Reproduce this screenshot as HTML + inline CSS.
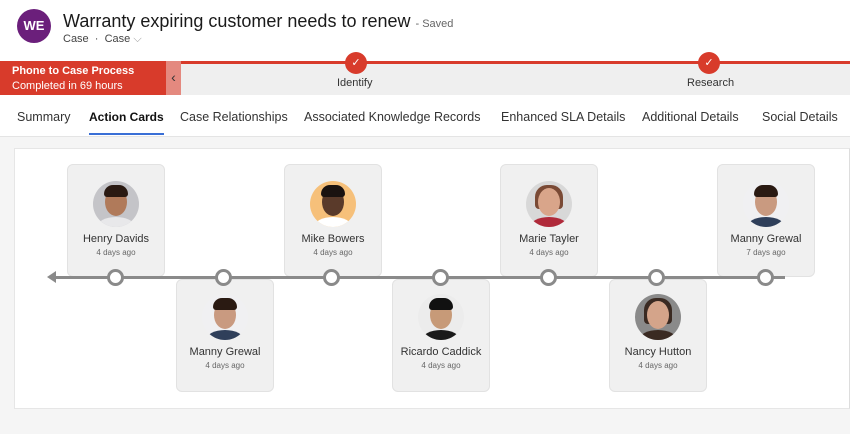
<!DOCTYPE html>
<html><head><meta charset="utf-8"><style>
*{margin:0;padding:0;box-sizing:border-box}
body{width:850px;height:434px;overflow:hidden;background:#f5f5f5;font-family:"Liberation Sans",sans-serif;position:relative;color:#242424}
.abs{position:absolute}
.hdr{left:0;top:0;width:850px;height:137px;background:#fff}
.card{position:absolute;width:98px;height:113px;background:#f0f0f0;border:1px solid #e2e2e2;border-radius:6px;text-align:center}
.av{position:absolute;left:25px;width:46px;height:46px;border-radius:50%;overflow:hidden}
.av .h{position:absolute;left:12px;top:7px;width:22px;height:28px;border-radius:50%}
.av .hr{position:absolute;left:11px;top:4px;width:24px;height:12px;border-radius:12px 12px 4px 4px}
.av .b{position:absolute;left:4px;top:36px;width:38px;height:20px;border-radius:50% 50% 0 0}
.nm{position:absolute;left:0;width:100%;font-size:11px;color:#333}
.dt{position:absolute;left:0;width:100%;font-size:8px;color:#666}
.node{position:absolute;width:17px;height:17px;border-radius:50%;background:#fff;border:3px solid #8a8a8a;top:269px}
.tab{position:absolute;top:110px;font-size:12.5px;color:#333}
</style></head><body>
<div class="abs hdr"></div>
<div class="abs" style="left:17px;top:9px;width:34px;height:34px;border-radius:50%;background:#6b1f7b;color:#fff;font-weight:bold;font-size:13px;line-height:34px;text-align:center">WE</div>
<div class="abs" style="left:63px;top:11px;font-size:18px;color:#1a1a1a">Warranty expiring customer needs to renew <span style="font-size:11px;color:#666">- Saved</span></div>
<div class="abs" style="left:63px;top:33px;font-size:11px;color:#444">Case &nbsp;·&nbsp; Case <span style="color:#999">⌵</span></div>
<div class="abs" style="left:0;top:61px;width:850px;height:34px;background:#efefef"></div>
<div class="abs" style="left:181px;top:61px;width:669px;height:3px;background:#d83b2b"></div>
<div class="abs" style="left:0;top:61px;width:166px;height:34px;background:#d83b2b;color:#fff;padding:3px 0 0 12px;font-size:11px;line-height:15px"><b>Phone to Case Process</b><br>Completed in 69 hours</div>
<div class="abs" style="left:166px;top:61px;width:15px;height:34px;background:#e4897f;color:#333;font-size:14px;text-align:center;line-height:32px">‹</div>
<div class="abs" style="left:345px;top:52px;width:22px;height:22px;border-radius:50%;background:#d83b2b;color:#fff;font-size:11px;text-align:center;line-height:22px">✓</div>
<div class="abs" style="left:698px;top:52px;width:22px;height:22px;border-radius:50%;background:#d83b2b;color:#fff;font-size:11px;text-align:center;line-height:22px">✓</div>
<div class="abs" style="left:337px;top:77px;font-size:11px;color:#333">Identify</div>
<div class="abs" style="left:687px;top:77px;font-size:11px;color:#333">Research</div>
<div class="tab" style="left:17px">Summary</div>
<div class="tab" style="left:89px;color:#111;font-weight:bold;font-size:12px">Action Cards</div>
<div class="abs" style="left:89px;top:133px;width:75px;height:2px;background:#3a6fd6"></div>
<div class="tab" style="left:180px">Case Relationships</div>
<div class="tab" style="left:304px">Associated Knowledge Records</div>
<div class="tab" style="left:501px">Enhanced SLA Details</div>
<div class="tab" style="left:642px">Additional Details</div>
<div class="tab" style="left:762px">Social Details</div>
<div class="abs" style="left:0;top:136px;width:850px;height:1px;background:#e4e4e4"></div>
<div class="abs" style="left:14px;top:148px;width:836px;height:261px;background:#fff;border:1px solid #e6e6e6;border-right:1px solid #ddd"></div>

<div class="card" style="left:67px;top:164px"><div class="av" style="top:16px;background:#c4c4c8"><div class="b" style="background:#e8e8ea"></div><div class="h" style="background:#b07a5a"></div><div class="hr" style="background:#2a1a12"></div></div><div class="nm" style="top:68px">Henry Davids</div><div class="dt" style="top:83px">4 days ago</div></div>
<div class="card" style="left:284px;top:164px"><div class="av" style="top:16px;background:#f6c07a"><div class="b" style="background:#fff"></div><div class="h" style="background:#5a3a2a"></div><div class="hr" style="background:#1a1210"></div></div><div class="nm" style="top:68px">Mike Bowers</div><div class="dt" style="top:83px">4 days ago</div></div>
<div class="card" style="left:500px;top:164px"><div class="av" style="top:16px;background:#d8d8d8"><div class="b" style="background:#b02a3a"></div><div class="hr" style="background:#7a4a35;height:24px;left:9px;width:28px"></div><div class="h" style="background:#d9a58a"></div></div><div class="nm" style="top:68px">Marie Tayler</div><div class="dt" style="top:83px">4 days ago</div></div>
<div class="card" style="left:717px;top:164px"><div class="av" style="top:16px;background:#f0f0f2"><div class="b" style="background:#2f3f5a"></div><div class="h" style="background:#c99a80"></div><div class="hr" style="background:#2a1a12"></div></div><div class="nm" style="top:68px">Manny Grewal</div><div class="dt" style="top:83px">7 days ago</div></div>
<div class="card" style="left:176px;top:279px"><div class="av" style="top:14px;background:#f0f0f2"><div class="b" style="background:#2f3f5a"></div><div class="h" style="background:#c99a80"></div><div class="hr" style="background:#2a1a12"></div></div><div class="nm" style="top:66px">Manny Grewal</div><div class="dt" style="top:81px">4 days ago</div></div>
<div class="card" style="left:392px;top:279px"><div class="av" style="top:14px;background:#ececec"><div class="b" style="background:#1a1a1a"></div><div class="h" style="background:#c79a78"></div><div class="hr" style="background:#111"></div></div><div class="nm" style="top:66px">Ricardo Caddick</div><div class="dt" style="top:81px">4 days ago</div></div>
<div class="card" style="left:609px;top:279px"><div class="av" style="top:14px;background:#8a8a8a"><div class="b" style="background:#3a2a22"></div><div class="hr" style="background:#3a2a22;height:26px;left:9px;width:28px"></div><div class="h" style="background:#d4a48a"></div></div><div class="nm" style="top:66px">Nancy Hutton</div><div class="dt" style="top:81px">4 days ago</div></div>

<div class="abs" style="left:52px;top:276px;width:733px;height:3px;background:#8a8a8a"></div>
<div class="abs" style="left:47px;top:271px;width:0;height:0;border-top:6px solid transparent;border-bottom:6px solid transparent;border-right:9px solid #8a8a8a"></div>
<div class="node" style="left:107px"></div>
<div class="node" style="left:215px"></div>
<div class="node" style="left:323px"></div>
<div class="node" style="left:432px"></div>
<div class="node" style="left:540px"></div>
<div class="node" style="left:648px"></div>
<div class="node" style="left:757px"></div>
</body></html>
